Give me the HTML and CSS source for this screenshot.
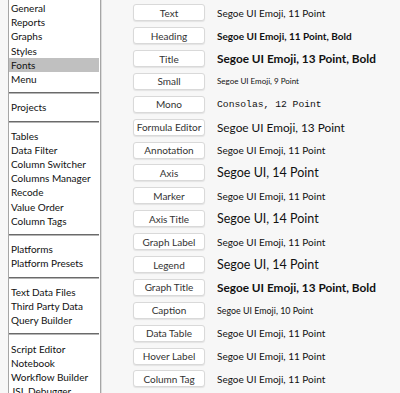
FILE: index.html
```html
<!DOCTYPE html>
<html lang="en">

<head>
  <meta charset="UTF-8">
  <title>Preferences - Fonts</title>
  <link rel="stylesheet" href="styles.css">
</head>

<body>
  <div class="page">
    <div class="side-list">
      <div class="item">General</div>
      <div class="item">Reports</div>
      <div class="item">Graphs</div>
      <div class="item">Styles</div>
      <div class="item selected">Fonts</div>
      <div class="item">Menu</div>
      <div class="sep"></div>
      <div class="item">Projects</div>
      <div class="sep"></div>
      <div class="item">Tables</div>
      <div class="item">Data Filter</div>
      <div class="item">Column Switcher</div>
      <div class="item">Columns Manager</div>
      <div class="item">Recode</div>
      <div class="item">Value Order</div>
      <div class="item">Column Tags</div>
      <div class="sep"></div>
      <div class="item">Platforms</div>
      <div class="item">Platform Presets</div>
      <div class="sep"></div>
      <div class="item">Text Data Files</div>
      <div class="item">Third Party Data</div>
      <div class="item">Query Builder</div>
      <div class="sep"></div>
      <div class="item">Script Editor</div>
      <div class="item">Notebook</div>
      <div class="item">Workflow Builder</div>
      <div class="item">JSL Debugger</div>
    </div>

    <div class="fonts">
      <div class="font-row">
        <button class="btn">Text</button>
        <span class="sample s11">Segoe UI Emoji, 11 Point</span>
      </div>
      <div class="font-row">
        <button class="btn">Heading</button>
        <span class="sample s11 bold">Segoe UI Emoji, 11 Point, Bold</span>
      </div>
      <div class="font-row">
        <button class="btn">Title</button>
        <span class="sample s13 bold">Segoe UI Emoji, 13 Point, Bold</span>
      </div>
      <div class="font-row">
        <button class="btn">Small</button>
        <span class="sample s9">Segoe UI Emoji, 9 Point</span>
      </div>
      <div class="font-row">
        <button class="btn">Mono</button>
        <span class="sample mono">Consolas, 12 Point</span>
      </div>
      <div class="font-row">
        <button class="btn">Formula Editor</button>
        <span class="sample s13">Segoe UI Emoji, 13 Point</span>
      </div>
      <div class="font-row">
        <button class="btn">Annotation</button>
        <span class="sample s11">Segoe UI Emoji, 11 Point</span>
      </div>
      <div class="font-row">
        <button class="btn">Axis</button>
        <span class="sample s14">Segoe UI, 14 Point</span>
      </div>
      <div class="font-row">
        <button class="btn">Marker</button>
        <span class="sample s11">Segoe UI Emoji, 11 Point</span>
      </div>
      <div class="font-row">
        <button class="btn">Axis Title</button>
        <span class="sample s14">Segoe UI, 14 Point</span>
      </div>
      <div class="font-row">
        <button class="btn">Graph Label</button>
        <span class="sample s11">Segoe UI Emoji, 11 Point</span>
      </div>
      <div class="font-row">
        <button class="btn">Legend</button>
        <span class="sample s14">Segoe UI, 14 Point</span>
      </div>
      <div class="font-row">
        <button class="btn">Graph Title</button>
        <span class="sample s13 bold">Segoe UI Emoji, 13 Point, Bold</span>
      </div>
      <div class="font-row">
        <button class="btn">Caption</button>
        <span class="sample s10">Segoe UI Emoji, 10 Point</span>
      </div>
      <div class="font-row">
        <button class="btn">Data Table</button>
        <span class="sample s11">Segoe UI Emoji, 11 Point</span>
      </div>
      <div class="font-row">
        <button class="btn">Hover Label</button>
        <span class="sample s11">Segoe UI Emoji, 11 Point</span>
      </div>
      <div class="font-row">
        <button class="btn">Column Tag</button>
        <span class="sample s11">Segoe UI Emoji, 11 Point</span>
      </div>
    </div>
  </div>
</body>

</html>
```

FILE: styles.css
```css
/* Preferences: font settings panel */
body {
  margin: 0;
  background-color: #f7f7f7;
  font-family: Lato, "Noto Sans", sans-serif;
  color: #1a1a1a;
  overflow: hidden;
}

.page {
  display: flex;
  height: 393px;
}

.side-list {
  flex: none;
  margin-left: 8px;
  width: 90px;
  padding: 1px 1px 0 0;
  background-color: #fff;
  border-left: 1px solid #a6a6a6;
  border-right: 1px solid #a6a6a6;
  box-shadow: 1px 0 0 #dcdcdc;
  overflow: hidden;
}

.item {
  height: 14.2px;
  line-height: 14.2px;
  padding-left: 2px;
  font-size: 10px;
  white-space: nowrap;
  color: #111;
}

.item.selected {
  background-color: #c0c0c0;
}

.sep {
  height: 14.2px;
  display: flex;
  align-items: center;
}

.sep::before {
  content: "";
  display: block;
  width: 100%;
  height: 1px;
  border-bottom: 1px solid #b5b5b5;
  background-color: #6a6a6a;
}

.fonts {
  padding: 1.3px 0 0 32px;
}

.font-row {
  height: 22.9px;
  display: flex;
  align-items: center;
  gap: 12px;
  white-space: nowrap;
}

.btn {
  flex: none;
  width: 72px;
  height: 17px;
  padding: 0;
  background-color: #fff;
  border: 1px solid #d9d9d9;
  border-radius: 3px;
  box-shadow: 0 1px 1px rgba(0, 0, 0, 0.08);
  font-family: Lato, "Noto Sans", sans-serif;
  font-size: 10px;
  color: #333;
  white-space: nowrap;
}

.sample {
  color: #111;
}

.s9 {
  font-size: 8px;
}

.s10 {
  font-size: 8.9px;
}

.s11 {
  font-size: 10px;
}

.s13 {
  font-size: 11.8px;
}

.s14 {
  font-size: 12.5px;
}

.bold {
  font-weight: bold;
}

.mono {
  font-family: "Liberation Mono", monospace;
  font-size: 9.7px;
}
```
